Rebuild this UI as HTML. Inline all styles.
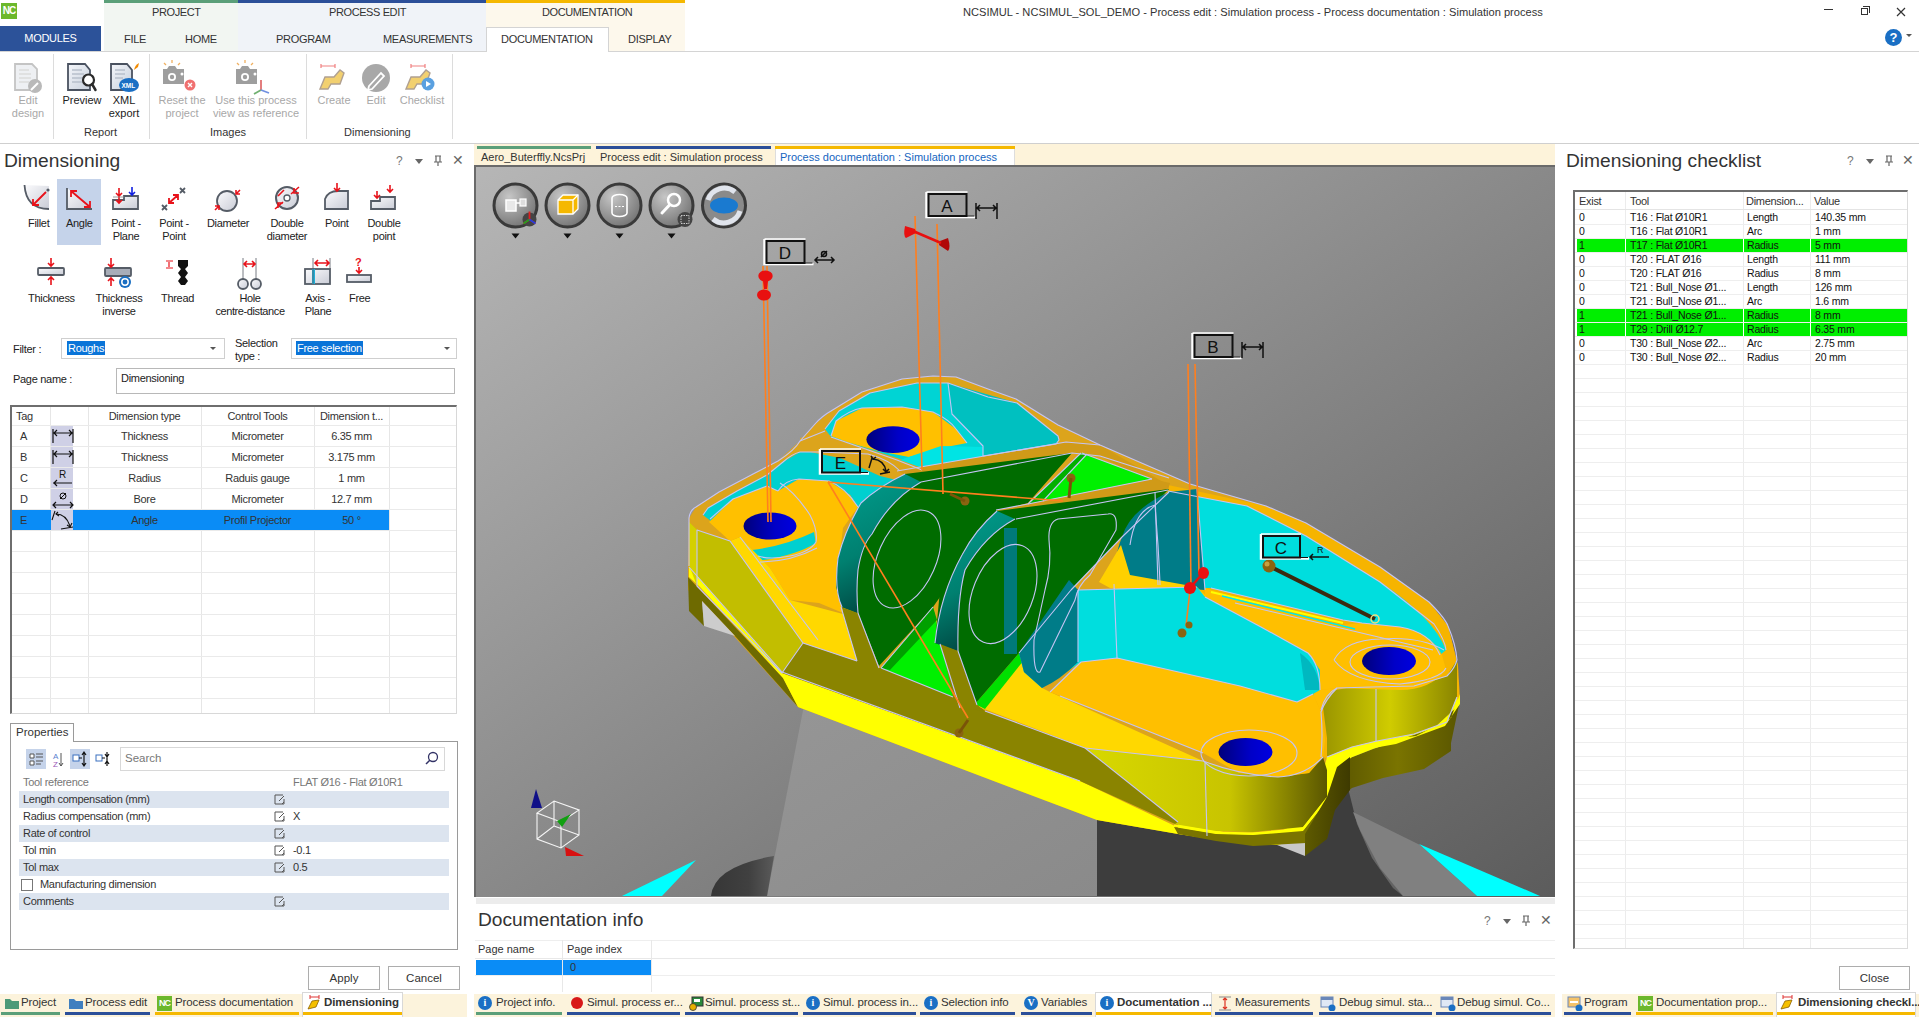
<!DOCTYPE html>
<html><head><meta charset="utf-8">
<style>
*{box-sizing:border-box}
body{margin:0;width:1919px;height:1017px;position:relative;overflow:hidden;background:#fff;font-family:"Liberation Sans",sans-serif;color:#222;font-size:11px}
.a{position:absolute;white-space:nowrap}
.ctxh{position:absolute;top:0;height:52px}
.tab{position:absolute;top:33px;font-size:11px;color:#333;letter-spacing:-0.3px}
.rb{position:absolute;text-align:center;font-size:11px;line-height:13px;color:#222}
.dis{color:#a8a8a8}
.sep{position:absolute;top:54px;height:85px;width:1px;background:#dcdcdc}
.glab{position:absolute;top:126px;font-size:11px;color:#333}
</style></head><body>
<!-- ===== TOP ===== -->
<div class="a" style="left:1px;top:3px;width:16px;height:16px;background:#6cb82c;color:#fff;font-weight:bold;font-size:10px;line-height:16px;text-align:center;letter-spacing:-1px">NC</div>
<div class="ctxh" style="left:104px;width:134px;background:#f2f6f2;border-top:3px solid #5b9f79"></div>
<div class="ctxh" style="left:238px;width:248px;background:#f0f3f8;border-top:3px solid #2c4f99"></div>
<div class="ctxh" style="left:486px;width:199px;background:#fdf8ec;border-top:3px solid #f5b800"></div>
<div class="a" style="left:152px;top:6px;font-size:11px;letter-spacing:-0.4px;color:#333">PROJECT</div>
<div class="a" style="left:329px;top:6px;font-size:11px;letter-spacing:-0.4px;color:#333">PROCESS EDIT</div>
<div class="a" style="left:542px;top:6px;font-size:11px;letter-spacing:-0.4px;color:#333">DOCUMENTATION</div>
<div class="a" style="left:963px;top:6px;font-size:11.1px;color:#333">NCSIMUL - NCSIMUL_SOL_DEMO - Process edit : Simulation process - Process documentation : Simulation process</div>
<!-- window buttons -->
<div class="a" style="left:1824px;top:9px;width:9px;height:1px;background:#333"></div>
<div class="a" style="left:1861px;top:8px;width:7px;height:7px;border:1px solid #333;background:#fff"></div><div class="a" style="left:1863px;top:6px;width:7px;height:7px;border-top:1px solid #333;border-right:1px solid #333"></div>
<svg class="a" style="left:1896px;top:7px" width="10" height="10"><path d="M1 1l8 8M9 1l-8 8" stroke="#333" stroke-width="1.2"/></svg>
<!-- tab row -->
<div class="a" style="left:0;top:26px;width:101px;height:25px;background:#2c5299;color:#fff;font-size:11px;line-height:25px;text-align:center;letter-spacing:-0.3px">MODULES</div>
<div class="a" style="left:0;top:51px;width:1919px;height:1px;background:#d4d4d4"></div>
<div class="tab" style="left:124px">FILE</div>
<div class="tab" style="left:185px">HOME</div>
<div class="tab" style="left:276px">PROGRAM</div>
<div class="tab" style="left:383px">MEASUREMENTS</div>
<div class="a" style="left:486px;top:27px;width:123px;height:25px;background:#fff;border:1px solid #d4d4d4;border-bottom:none"></div>
<div class="tab" style="left:501px">DOCUMENTATION</div>
<div class="tab" style="left:628px">DISPLAY</div>
<!-- help -->
<div class="a" style="left:1885px;top:29px;width:17px;height:17px;border-radius:50%;background:#1a6fc4;color:#fff;font-weight:bold;font-size:13px;line-height:17px;text-align:center">?</div>
<div class="a" style="left:1906px;top:34px;width:0;height:0;border-left:3px solid transparent;border-right:3px solid transparent;border-top:3px solid #555"></div>
<!-- ribbon -->
<div class="a" style="left:0;top:143px;width:1919px;height:1px;background:#cfcfcf"></div>
<div class="sep" style="left:53px"></div>
<div class="sep" style="left:149px"></div>
<div class="sep" style="left:306px"></div>
<div class="sep" style="left:452px"></div>
<div class="glab" style="left:84px">Report</div>
<div class="glab" style="left:210px">Images</div>
<div class="glab" style="left:344px">Dimensioning</div>
<!-- ribbon buttons -->
<div class="rb dis" style="left:8px;top:94px;width:40px">Edit<br>design</div>
<div class="rb" style="left:60px;top:94px;width:44px">Preview</div>
<div class="rb" style="left:104px;top:94px;width:40px">XML<br>export</div>
<div class="rb dis" style="left:154px;top:94px;width:56px">Reset the<br>project</div>
<div class="rb dis" style="left:208px;top:94px;width:96px">Use this process<br>view as reference</div>
<div class="rb dis" style="left:312px;top:94px;width:44px">Create</div>
<div class="rb dis" style="left:358px;top:94px;width:36px">Edit</div>
<div class="rb dis" style="left:396px;top:94px;width:52px">Checklist</div>
<svg class="a" style="left:0;top:52px" width="460" height="45">
 <defs>
  <linearGradient id="doc" x1="0" y1="0" x2="1" y2="1"><stop offset="0" stop-color="#f4f6fa"/><stop offset="1" stop-color="#c8d0dc"/></linearGradient>
 </defs>
 <!-- edit design (disabled) -->
 <path d="M15,12 h17 l5,5 v21 h-22 z" fill="#eef0f3" stroke="#c4c4c4" stroke-width="1.8"/>
 <path d="M19,18h10 M19,22h12 M19,26h12 M19,30h10" stroke="#dcdcdc" stroke-width="1.3"/>
 <circle cx="35" cy="34" r="7" fill="#b9b9b9"/>
 <path d="M31,38 l7-7" stroke="#fff" stroke-width="2"/>
 <!-- preview -->
 <path d="M68,12 h17 l5,6 v20 h-22 z" fill="url(#doc)" stroke="#4a5260" stroke-width="1.8"/>
 <path d="M72,18h10 M72,22h12 M72,26h12 M72,30h10" stroke="#b8c0cc" stroke-width="1.3"/>
 <circle cx="88.5" cy="28" r="5.5" fill="#fff" stroke="#2a2a2a" stroke-width="2.2"/>
 <path d="M92,32 l3.5,6" stroke="#2a2a2a" stroke-width="2.5" stroke-linecap="round"/>
 <!-- xml export -->
 <path d="M111,12 h16 l5,6 v20 h-21 z" fill="url(#doc)" stroke="#4a5260" stroke-width="1.8"/>
 <path d="M115,18h10 M115,22h10 M115,26h8" stroke="#b8c0cc" stroke-width="1.3"/>
 <ellipse cx="129" cy="33" rx="10" ry="7" fill="#1a6fc4"/>
 <text x="121.5" y="35.5" font-size="6.5" font-weight="bold" fill="#fff" font-family="Liberation Sans">XML</text>
 <path d="M134,18 q1,-5 5,-7 l-1,4 z" fill="#f28a00"/>
 <!-- reset camera (disabled) -->
 <path d="M167,17 l2,-3 h6 l2,3 h7 v15 h-21 v-15z" fill="#9e9e9e"/>
 <circle cx="172" cy="25" r="4" fill="#fff"/><circle cx="172" cy="25" r="2.2" fill="#9e9e9e"/>
 <circle cx="182" cy="22" r="1.5" fill="#fff"/>
 <path d="M172,11v-3 M166,13l-2,-2 M178,13l2,-2" stroke="#f0b060" stroke-width="1.3"/>
 <circle cx="190" cy="33" r="5.5" fill="#f07070"/>
 <path d="M188,31l4,4 M192,31l-4,4" stroke="#fff" stroke-width="1.4"/>
 <!-- use this view (disabled) -->
 <path d="M240,17 l2,-3 h6 l2,3 h7 v15 h-21 v-15z" fill="#9e9e9e"/>
 <circle cx="245" cy="25" r="4" fill="#fff"/><circle cx="245" cy="25" r="2.2" fill="#9e9e9e"/>
 <circle cx="255" cy="22" r="1.5" fill="#fff"/>
 <path d="M245,11v-3 M239,13l-2,-2 M251,13l2,-2" stroke="#f0b060" stroke-width="1.3"/>
 <path d="M261,38 v-10" stroke="#e07070" stroke-width="1.8"/><path d="M261,38 l-7,4" stroke="#70b070" stroke-width="1.8"/><path d="M261,38 l8,3" stroke="#7090e0" stroke-width="1.8"/>
 <!-- create (disabled) -->
 <path d="M321,14h14 M321,12v4 M335,12v4" stroke="#f08080" stroke-width="1.2"/>
 <path d="M320,37 l5,-12 h9 l6,-7 l4,3 l-4,11 h-9 l-3,5 z" fill="#f2d070" stroke="#b0a090" stroke-width="1.4"/>
 <!-- edit (disabled) -->
 <circle cx="376" cy="26" r="14" fill="#a8a8a8"/>
 <path d="M369,34 l12,-13 l3,3 l-12,13 l-4,1 z" fill="none" stroke="#fff" stroke-width="1.8"/>
 <!-- checklist (disabled) -->
 <path d="M411,14h14 M411,12v4 M425,12v4" stroke="#f08080" stroke-width="1.2"/>
 <path d="M406,37 l5,-12 h9 l6,-7 l4,3 l-4,11 h-9 l-3,5 z" fill="#f2d070" stroke="#b0a090" stroke-width="1.4"/>
 <circle cx="428" cy="32" r="6.5" fill="#5aa0e0"/>
 <path d="M426,29 l5,3 l-5,3 z" fill="#fff"/>
</svg>


<!-- ===== LEFT PANEL ===== -->
<div class="a" style="left:4px;top:150px;font-size:19.2px;color:#333">Dimensioning</div>
<div class="a" style="left:396px;top:154px;font-size:12px;color:#777">?</div>
<div class="a" style="left:415px;top:159px;width:0;height:0;border-left:4px solid transparent;border-right:4px solid transparent;border-top:5px solid #666"></div>
<svg class="a" style="left:433px;top:155px" width="10" height="12"><path d="M2 1h6M3 1v6h4V1M1 7h8M5 7v4" stroke="#666" stroke-width="1.2" fill="none"/></svg>
<div class="a" style="left:452px;top:152px;font-size:14px;color:#666">✕</div>
<!-- highlight Angle -->
<div class="a" style="left:57px;top:179px;width:44px;height:66px;background:#c5d3ea"></div>
<!-- icons row1 -->
<svg class="a" style="left:0;top:168px" width="420" height="48">
 <defs><linearGradient id="gi" x1="0" y1="0" x2="1" y2="1"><stop offset="0" stop-color="#fbfbfd"/><stop offset="1" stop-color="#c9ccd6"/></linearGradient></defs>
 <!-- fillet -->
 <path d="M24.5 20 Q26 44 49 44 V21 Z" transform="translate(0,-3)" fill="url(#gi)"/>
 <path d="M24.5 17 Q26 41 49 41" stroke="#555c66" stroke-width="1.8" fill="none"/>
 <circle cx="48" cy="22" r="1.6" fill="#555c66"/>
 <path d="M46 24 L34 36 M33 31v6h6" stroke="#e8121a" stroke-width="1.8" fill="none"/>
 <!-- angle -->
 <path d="M67 20 V41 H92" stroke="#555c66" stroke-width="1.8" fill="url(#gi)"/>
 <path d="M71 23 L90 39 M71 29v-6h6 M90 33v6h-6" stroke="#e8121a" stroke-width="1.8" fill="none"/>
 <!-- point-plane -->
 <path d="M113 41 V32 H124 V28 H138 V41 Z" stroke="#555c66" stroke-width="1.8" fill="url(#gi)"/>
 <path d="M119 20v8 M116 25l3 3 3-3 M119 27v8 M116 32l3 3 3-3" stroke="#e8121a" stroke-width="1.6" fill="none"/>
 <path d="M132 19v8 M129 24l3 3 3-3" stroke="#1020e0" stroke-width="1.6" fill="none"/>
 <path d="M113 29h11" stroke="#888" stroke-width="0.8"/>
 <!-- point-point -->
 <path d="M162 37l5 5 M167 37l-5 5 M180 20l5 5 M185 20l-5 5" stroke="#555c66" stroke-width="1.8"/>
 <path d="M169 35 L178 27 M169 30v5h5 M178 32v-5h-5" stroke="#e8121a" stroke-width="1.8" fill="none"/>
 <!-- diameter -->
 <circle cx="227" cy="33" r="10" fill="url(#gi)" stroke="#555c66" stroke-width="1.8"/>
 <path d="M240 22l-4 4 M236 22v4h4 M215 42l4-4 M219 42v-4h-4" stroke="#e8121a" stroke-width="1.6" fill="none"/>
 <!-- double diameter -->
 <circle cx="287" cy="30" r="11" fill="url(#gi)" stroke="#555c66" stroke-width="2"/>
 <circle cx="287" cy="30" r="3" fill="#fff" stroke="#555c66" stroke-width="1.3"/>
 <path d="M299 19l-8 7 M294 20v5h5 M275 41l8-7 M278 40v-5h5 M284 22l-6 6" stroke="#e8121a" stroke-width="1.6" fill="none"/>
 <!-- point -->
 <path d="M325 41 V31 Q328 23 338 23 H348 V41 Z" stroke="#555c66" stroke-width="1.8" fill="url(#gi)"/>
 <path d="M337 15v8 M334 20l3 3 3-3" stroke="#e8121a" stroke-width="1.6" fill="none"/>
 <!-- double point -->
 <path d="M371 41 V33 H380 V29 H395 V41 Z" stroke="#555c66" stroke-width="1.8" fill="url(#gi)"/>
 <path d="M377 23v7 M374 27l3 3 3-3 M390 17v7 M387 21l3 3 3-3" stroke="#e8121a" stroke-width="1.6" fill="none"/>
</svg>
<div class="a" style="left:28px;top:217px;font-size:11px;letter-spacing:-0.3px">Fillet</div>
<div class="a" style="left:66px;top:217px;font-size:11px;letter-spacing:-0.3px">Angle</div>
<div class="a" style="left:104px;top:217px;width:44px;text-align:center;font-size:11px;line-height:13px;white-space:normal;letter-spacing:-0.3px">Point -<br>Plane</div>
<div class="a" style="left:152px;top:217px;width:44px;text-align:center;font-size:11px;line-height:13px;letter-spacing:-0.3px">Point -<br>Point</div>
<div class="a" style="left:205px;top:217px;width:46px;text-align:center;font-size:11px;letter-spacing:-0.3px">Diameter</div>
<div class="a" style="left:262px;top:217px;width:50px;text-align:center;font-size:11px;line-height:13px;letter-spacing:-0.3px">Double<br>diameter</div>
<div class="a" style="left:325px;top:217px;font-size:11px;letter-spacing:-0.3px">Point</div>
<div class="a" style="left:362px;top:217px;width:44px;text-align:center;font-size:11px;line-height:13px;letter-spacing:-0.3px">Double<br>point</div>
<!-- icons row2 -->
<svg class="a" style="left:0;top:255px" width="420" height="40">
 <!-- thickness -->
 <rect x="38" y="13" width="26" height="7" rx="1" fill="url(#gi)" stroke="#555c66" stroke-width="1.8"/>
 <path d="M51 3v8 M48 8l3 3 3-3 M51 30v-8 M48 25l3-3 3 3" stroke="#e8121a" stroke-width="1.6" fill="none"/>
 <!-- thickness inverse -->
 <rect x="105" y="13" width="26" height="8" rx="1" fill="#a8adb8" stroke="#555c66" stroke-width="1.8"/>
 <path d="M111 3v9 M108 9l3 3 3-3 M111 31v-8 M108 26l3-3 3 3" stroke="#e8121a" stroke-width="1.6" fill="none"/>
 <circle cx="125" cy="27" r="6" fill="#1b6fc2"/>
 <circle cx="125" cy="27" r="3.2" fill="none" stroke="#fff" stroke-width="1.5"/>
 <!-- thread -->
 <path d="M178 5 h10 v6 l-3 3 3 4 -3 4 3 4 -3 4 h-4 l-3-4 3-4 -3-4 3-4 -3-3z" fill="#111"/>
 <path d="M166 6h7 M166 13h7 M169 7v5" stroke="#e8121a" stroke-width="1.2"/>
 <!-- hole centre-distance -->
 <circle cx="243" cy="29" r="5" fill="url(#gi)" stroke="#555c66" stroke-width="1.8"/>
 <circle cx="256" cy="29" r="5" fill="url(#gi)" stroke="#555c66" stroke-width="1.8"/>
 <path d="M243 3v22 M256 3v22" stroke="#555c66" stroke-width="0.8"/>
 <path d="M244 9h11 M247 6l-3 3 3 3 M252 6l3 3-3 3" stroke="#e8121a" stroke-width="1.6" fill="none"/>
 <!-- axis plane -->
 <rect x="305" y="14" width="25" height="15" fill="url(#gi)" stroke="#555c66" stroke-width="1.8"/>
 <rect x="312" y="14" width="3" height="15" fill="#20b0d8"/>
 <path d="M313 3v26 M330 3v11" stroke="#555c66" stroke-width="0.8"/>
 <path d="M315 8h14 M318 5l-3 3 3 3 M326 5l3 3-3 3" stroke="#e8121a" stroke-width="1.6" fill="none"/>
 <!-- free -->
 <rect x="347" y="20" width="24" height="7" fill="url(#gi)" stroke="#555c66" stroke-width="1.8"/>
 <text x="355" y="11" font-size="11" font-weight="bold" fill="#e8121a" font-family="Liberation Sans">?</text>
 <path d="M359 12v6 M356 15l3 3 3-3" stroke="#e8121a" stroke-width="1.6" fill="none"/>
</svg>
<div class="a" style="left:28px;top:292px;font-size:11px;letter-spacing:-0.3px">Thickness</div>
<div class="a" style="left:90px;top:292px;width:58px;text-align:center;font-size:11px;line-height:13px;letter-spacing:-0.3px">Thickness<br>inverse</div>
<div class="a" style="left:161px;top:292px;font-size:11px;letter-spacing:-0.3px">Thread</div>
<div class="a" style="left:206px;top:292px;width:88px;text-align:center;font-size:11px;line-height:13px;letter-spacing:-0.4px">Hole<br>centre-distance</div>
<div class="a" style="left:296px;top:292px;width:44px;text-align:center;font-size:11px;line-height:13px;letter-spacing:-0.3px">Axis -<br>Plane</div>
<div class="a" style="left:349px;top:292px;font-size:11px;letter-spacing:-0.3px">Free</div>
<!-- filter -->
<div class="a" style="left:13px;top:343px;font-size:11px;letter-spacing:-0.3px">Filter :</div>
<div class="a" style="left:61px;top:338px;width:164px;height:21px;border:1px solid #cfcfcf;background:#fff"></div>
<div class="a" style="left:67px;top:341px;height:14px;background:#0a74d8;color:#fff;font-size:11px;line-height:14px;padding:0 1px;letter-spacing:-0.3px">Roughs</div>
<div class="a" style="left:210px;top:347px;border-left:3px solid transparent;border-right:3px solid transparent;border-top:3px solid #555"></div>
<div class="a" style="left:235px;top:337px;font-size:11px;line-height:13px;letter-spacing:-0.3px">Selection<br>type :</div>
<div class="a" style="left:291px;top:338px;width:166px;height:21px;border:1px solid #cfcfcf;background:#fff"></div>
<div class="a" style="left:296px;top:341px;height:14px;background:#0a74d8;color:#fff;font-size:11px;line-height:14px;padding:0 1px;letter-spacing:-0.3px">Free selection</div>
<div class="a" style="left:444px;top:347px;border-left:3px solid transparent;border-right:3px solid transparent;border-top:3px solid #555"></div>
<div class="a" style="left:13px;top:373px;font-size:11px;letter-spacing:-0.3px">Page name :</div>
<div class="a" style="left:116px;top:368px;width:339px;height:26px;border:1px solid #b8b8b8;background:#fff"></div>
<div class="a" style="left:121px;top:372px;font-size:11px;letter-spacing:-0.3px">Dimensioning</div>
<!-- GRID -->
<div class="a" style="left:10px;top:405px;width:447px;height:309px;border-top:2px solid #6e6e6e;border-left:2px solid #6e6e6e;border-right:1px solid #d8d8d8;border-bottom:1px solid #d8d8d8;background:#fff;overflow:hidden">
<div class="a" style="left:38px;top:0;width:1px;height:309px;background:#e6e6e6"></div>
<div class="a" style="left:76px;top:0;width:1px;height:309px;background:#e6e6e6"></div>
<div class="a" style="left:189px;top:0;width:1px;height:309px;background:#e6e6e6"></div>
<div class="a" style="left:302px;top:0;width:1px;height:309px;background:#e6e6e6"></div>
<div class="a" style="left:377px;top:0;width:1px;height:309px;background:#e6e6e6"></div>
<div class="a" style="left:0;top:18px;width:447px;height:1px;background:#eaeaea"></div>
<div class="a" style="left:0;top:39px;width:447px;height:1px;background:#eaeaea"></div>
<div class="a" style="left:0;top:60px;width:447px;height:1px;background:#eaeaea"></div>
<div class="a" style="left:0;top:81px;width:447px;height:1px;background:#eaeaea"></div>
<div class="a" style="left:0;top:102px;width:447px;height:1px;background:#eaeaea"></div>
<div class="a" style="left:0;top:123px;width:447px;height:1px;background:#eaeaea"></div>
<div class="a" style="left:0;top:144px;width:447px;height:1px;background:#eaeaea"></div>
<div class="a" style="left:0;top:165px;width:447px;height:1px;background:#eaeaea"></div>
<div class="a" style="left:0;top:186px;width:447px;height:1px;background:#eaeaea"></div>
<div class="a" style="left:0;top:207px;width:447px;height:1px;background:#eaeaea"></div>
<div class="a" style="left:0;top:228px;width:447px;height:1px;background:#eaeaea"></div>
<div class="a" style="left:0;top:249px;width:447px;height:1px;background:#eaeaea"></div>
<div class="a" style="left:0;top:270px;width:447px;height:1px;background:#eaeaea"></div>
<div class="a" style="left:0;top:291px;width:447px;height:1px;background:#eaeaea"></div>
<div class="a" style="left:4px;top:3px;width:34px;text-align:left;font-size:11px;color:#333;letter-spacing:-0.3px">Tag</div>
<div class="a" style="left:76px;top:3px;width:113px;text-align:center;font-size:11px;color:#333;letter-spacing:-0.3px">Dimension type</div>
<div class="a" style="left:189px;top:3px;width:113px;text-align:center;font-size:11px;color:#333;letter-spacing:-0.3px">Control Tools</div>
<div class="a" style="left:302px;top:3px;width:75px;text-align:center;font-size:11px;color:#333;letter-spacing:-0.3px">Dimension t...</div>
<div class="a" style="left:39px;top:19px;width:22px;height:20px;background:#cfd0e6"></div>
<div class="a" style="left:8px;top:23px;width:30px;text-align:left;font-size:11px;color:#333;letter-spacing:-0.3px">A</div>
<div class="a" style="left:76px;top:23px;width:113px;text-align:center;font-size:11px;color:#333;letter-spacing:-0.3px">Thickness</div>
<div class="a" style="left:189px;top:23px;width:113px;text-align:center;font-size:11px;color:#333;letter-spacing:-0.3px">Micrometer</div>
<div class="a" style="left:302px;top:23px;width:75px;text-align:center;font-size:11px;color:#333;letter-spacing:-0.3px">6.35 mm</div>
<div class="a" style="left:39px;top:40px;width:22px;height:20px;background:#cfd0e6"></div>
<div class="a" style="left:8px;top:44px;width:30px;text-align:left;font-size:11px;color:#333;letter-spacing:-0.3px">B</div>
<div class="a" style="left:76px;top:44px;width:113px;text-align:center;font-size:11px;color:#333;letter-spacing:-0.3px">Thickness</div>
<div class="a" style="left:189px;top:44px;width:113px;text-align:center;font-size:11px;color:#333;letter-spacing:-0.3px">Micrometer</div>
<div class="a" style="left:302px;top:44px;width:75px;text-align:center;font-size:11px;color:#333;letter-spacing:-0.3px">3.175 mm</div>
<div class="a" style="left:39px;top:61px;width:22px;height:20px;background:#cfd0e6"></div>
<div class="a" style="left:8px;top:65px;width:30px;text-align:left;font-size:11px;color:#333;letter-spacing:-0.3px">C</div>
<div class="a" style="left:76px;top:65px;width:113px;text-align:center;font-size:11px;color:#333;letter-spacing:-0.3px">Radius</div>
<div class="a" style="left:189px;top:65px;width:113px;text-align:center;font-size:11px;color:#333;letter-spacing:-0.3px">Raduis gauge</div>
<div class="a" style="left:302px;top:65px;width:75px;text-align:center;font-size:11px;color:#333;letter-spacing:-0.3px">1 mm</div>
<div class="a" style="left:39px;top:82px;width:22px;height:20px;background:#cfd0e6"></div>
<div class="a" style="left:8px;top:86px;width:30px;text-align:left;font-size:11px;color:#333;letter-spacing:-0.3px">D</div>
<div class="a" style="left:76px;top:86px;width:113px;text-align:center;font-size:11px;color:#333;letter-spacing:-0.3px">Bore</div>
<div class="a" style="left:189px;top:86px;width:113px;text-align:center;font-size:11px;color:#333;letter-spacing:-0.3px">Micrometer</div>
<div class="a" style="left:302px;top:86px;width:75px;text-align:center;font-size:11px;color:#333;letter-spacing:-0.3px">12.7 mm</div>
<div class="a" style="left:0;top:103px;width:377px;height:20px;background:#0a8cf6"></div>
<div class="a" style="left:39px;top:103px;width:22px;height:20px;background:#cfd0e6"></div>
<div class="a" style="left:8px;top:107px;width:30px;text-align:left;font-size:11px;color:#333;letter-spacing:-0.3px">E</div>
<div class="a" style="left:76px;top:107px;width:113px;text-align:center;font-size:11px;color:#333;letter-spacing:-0.3px">Angle</div>
<div class="a" style="left:189px;top:107px;width:113px;text-align:center;font-size:11px;color:#333;letter-spacing:-0.3px">Profil Projector</div>
<div class="a" style="left:302px;top:107px;width:75px;text-align:center;font-size:11px;color:#333;letter-spacing:-0.3px">50 °</div>
<svg class="a" style="left:39px;top:19px" width="24" height="20"><path d="M2 3v14 M22 3v14 M3 7h18 M6 4l-3 3 3 3 M18 4l3 3-3 3" stroke="#111" stroke-width="1.2" fill="none"/></svg>
<svg class="a" style="left:39px;top:40px" width="24" height="20"><path d="M2 3v14 M22 3v14 M3 7h18 M6 4l-3 3 3 3 M18 4l3 3-3 3" stroke="#111" stroke-width="1.2" fill="none"/></svg>
<svg class="a" style="left:39px;top:61px" width="24" height="20"><text x="8" y="10" font-size="10" font-family="Liberation Sans" fill="#111">R</text><path d="M2 15h19 M6 12l-3 3 3 3" stroke="#111" stroke-width="1.2" fill="none"/></svg>
<svg class="a" style="left:39px;top:82px" width="24" height="20"><circle cx="12" cy="7" r="3" stroke="#111" stroke-width="1" fill="none"/><path d="M9 10l6-6" stroke="#111" stroke-width="1"/><path d="M2 16h20 M5 13l-3 3 3 3 M19 13l3 3-3 3" stroke="#111" stroke-width="1.2" fill="none"/></svg>
<svg class="a" style="left:39px;top:103px" width="24" height="20"><path d="M1 10 L4 1 M5 4 Q15 4 19 16" stroke="#111" stroke-width="1.1" fill="none"/><path d="M7 2l-2 2 3 2 M16 15l3 2 2-4 M10 19 L22 17" stroke="#111" stroke-width="1.1" fill="none"/></svg>
</div>


<!-- ===== CENTER ===== -->
<!-- doc tabs -->
<div class="a" style="left:474px;top:144px;width:1081px;height:22px;background:#fdf3da"></div>
<div class="a" style="left:477px;top:146px;width:114px;height:3px;background:#5b9f79"></div>
<div class="a" style="left:596px;top:146px;width:175px;height:3px;background:#2c4f99"></div>
<div class="a" style="left:775px;top:146px;width:240px;height:3px;background:#f5b800"></div>
<div class="a" style="left:775px;top:149px;width:240px;height:17px;background:#fff;border-left:1px solid #ddd;border-right:1px solid #ddd"></div>
<div class="a" style="left:481px;top:151px;font-size:11px;color:#333">Aero_Buterffly.NcsPrj</div>
<div class="a" style="left:600px;top:151px;font-size:11px;color:#333">Process edit : Simulation process</div>
<div class="a" style="left:780px;top:151px;font-size:11px;color:#1565c0">Process documentation : Simulation process</div>
<!-- view -->
<div class="a" style="left:474px;top:165px;width:1081px;height:732px;border-top:2px solid #6a6a6a;border-left:2px solid #6a6a6a;background:linear-gradient(to bottom right,#b6b6b6,#5c5c5c);overflow:hidden"></div>
<svg class="a" style="left:0;top:0" width="1919" height="1017">
<defs>
 <clipPath id="vc"><rect x="476" y="167" width="1079" height="729"/></clipPath>
 <radialGradient id="btn" cx="0.35" cy="0.3" r="0.8"><stop offset="0" stop-color="#c6c6c6"/><stop offset="1" stop-color="#6e6e6e"/></radialGradient>
 <linearGradient id="wallR" x1="0" y1="0" x2="1" y2="0"><stop offset="0" stop-color="#d8d800"/><stop offset="0.6" stop-color="#c8c400"/><stop offset="1" stop-color="#5a5600"/></linearGradient>
 <linearGradient id="wallR2" x1="0" y1="0" x2="1" y2="0"><stop offset="0" stop-color="#9a9500"/><stop offset="0.5" stop-color="#d0cc00"/><stop offset="1" stop-color="#8a8500"/></linearGradient>
 <linearGradient id="lowR" x1="0" y1="0" x2="1" y2="0"><stop offset="0" stop-color="#4a4600"/><stop offset="0.6" stop-color="#7a7400"/><stop offset="1" stop-color="#5a5600"/></linearGradient>
 <linearGradient id="hole" x1="0" y1="0" x2="1" y2="0"><stop offset="0" stop-color="#00007a"/><stop offset="0.6" stop-color="#0000c8"/><stop offset="1" stop-color="#0000e0"/></linearGradient>
 <linearGradient id="cyw" x1="0" y1="0" x2="0" y2="1"><stop offset="0" stop-color="#00c8c8"/><stop offset="1" stop-color="#00e4e4"/></linearGradient>
 <linearGradient id="ped" x1="0" y1="0" x2="1" y2="1"><stop offset="0" stop-color="#969696"/><stop offset="1" stop-color="#8a8a8a"/></linearGradient>
<linearGradient id="ring" x1="0" y1="0" x2="0.3" y2="1"><stop offset="0" stop-color="#00a090"/><stop offset="0.6" stop-color="#008070"/><stop offset="1" stop-color="#004a44"/></linearGradient>
<linearGradient id="blob" x1="0" y1="0" x2="1" y2="0"><stop offset="0" stop-color="#363636"/><stop offset="0.6" stop-color="#404040"/><stop offset="1" stop-color="#5a5a5a"/></linearGradient>
<linearGradient id="sc" x1="0" y1="0" x2="1" y2="0"><stop offset="0" stop-color="#5e5a00"/><stop offset="1" stop-color="#3e3a00"/></linearGradient>
</defs>
<g clip-path="url(#vc)">
<!-- pedestal -->
<polygon points="805,700 1100,790 1097,896 767,896" fill="url(#ped)"/>
<path d="M711,896 Q714,866 774,856 L767,896 Z" fill="url(#blob)"/>
<polygon points="1097,812 1346,780 1357,824 1372,858 1393,888 1403,896 1097,896" fill="#3d3d3d"/>
<polygon points="1353,812 1420,845 1477,896 1403,896 1380,868 1360,830" fill="#808080"/>
<polygon points="1419,844 1540,896 1477,896" fill="#00ffff"/>
<polygon points="622,896 696,860 662,896" fill="#00ffff"/>
<polygon points="1272,843 1306,833 1305,856" fill="#c8c8c8"/>

<!-- lower plate under right lobe -->
<polygon points="1306,830 1327,767 1373,749 1434,728 1459,705 1451,743 1451,751 1424,769 1383,778 1352,788 1337,800 1327,838 1306,854" fill="url(#lowR)"/>
<!-- whole silhouette (rim orange) -->
<polygon points="689,518 696,507 719,492 755,473 778,461 800,441 815,424 831,411 862,392 902,379 933,376 956,377 988,389 1016,399 1058,425 1100,445 1190,484 1266,506 1306,523 1380,567 1429,602 1448,626 1458,666 1457,697 1327,757 1320,800 1306,839 1276,845 1232,842 1178,834 1097,820 798,707 702,601 688,590 688,565" fill="#dca41c"/>
<polygon points="1168,485 1266,506 1306,523 1380,567 1429,602 1448,626 1458,666 1460,700 1330,760 1200,700" fill="#f6b400"/>
<!-- dark olive bottom band at left end -->
<polygon points="688,577 783,678 798,707 735,636 702,601 704,626 689,611" fill="#6e6a00"/>
<polygon points="702,601 704,626 735,636" fill="#cccccc"/>
<!-- bottom bright yellow strip -->
<polygon points="689,564 782,673 1080,781 1175,826 1178,834 1097,820 798,707 783,678 700,587 689,577" fill="#ffff00"/>
<polygon points="1178,821 1232,834 1281,831 1311,817 1327,757 1346,746 1376,741 1416,736 1451,718 1460,694 1460,704 1445,726 1396,744 1357,751 1337,773 1331,800 1306,839 1276,845 1232,842 1178,834" fill="#ffff00"/>
<!-- front-right yellow-olive face under bottom hole -->
<polygon points="1085,748 1203,761 1239,773 1278,777 1309,773 1323,757 1327,770 1327,797 1303,827 1253,832 1216,831 1174,824" fill="url(#wallR)"/>
<polygon points="1174,827 1216,834 1253,835 1303,831 1327,800 1329,812 1306,843 1253,846 1216,841 1178,834" fill="#7a7400"/>
<path d="M1174,825.5 L1216,832.5 L1253,833.5 L1303,829 L1327,798.5" stroke="#ffff00" stroke-width="2.2" fill="none"/>
<!-- right lobe outer wall -->
<polygon points="1323,707 1331,691 1352,687 1377,689 1414,687 1447,676 1457,660 1457,697 1447,722 1414,734 1377,741 1352,747 1327,757 1327,738" fill="url(#wallR2)"/>
<polygon points="1327,757 1352,747 1377,741 1414,734 1447,722 1457,697 1459,705 1434,728 1373,749 1327,767" fill="#ffff00"/>
<polygon points="1327,757 1358,747 1334,778 1328,800" fill="#ffff00"/>
<polygon points="1305,834 1327,797 1337,767 1350,757 1350,790 1335,810 1327,839 1305,856" fill="url(#sc)"/>
<!-- left end faces -->
<polygon points="689,522 697,530 730,541 803,643 782,673 689,567" fill="#c2be00"/>
<polygon points="689,522 697,530 697,586 689,565" fill="#d4d000"/>
<polygon points="730,541 740,537 818,640 803,643" fill="#ffd800"/>
<!-- front dark olive face -->
<polygon points="782,673 803,643 857,661 841,607 858,613 879,668 882,668 940,644 958,651 977,705 985,711 1085,748 1178,822 1175,824 1080,781" fill="#8a8400"/>
<!-- yellow slope center-front -->
<polygon points="979,707 1019,653 1024,672 1042,688 1050,692 1203,761 1085,748" fill="#ffd800"/>
<polygon points="975,704 1019,653 1024,660 985,709" fill="#00e000"/>

<!-- ===== left pocket ===== -->
<polygon points="703,515 708,508 737,491 767,475 783,462 800,452 819,452 868,454 900,471 900,487 858,507 850,495 829,481 799,479 778,491 740,505 712,522" fill="#00d0d0"/>
<polygon points="709,522 733,499 767,486 778,491 799,479 829,481 850,495 858,507 843,528 837,578 843,613 819,603 790,600 770,568 740,537 730,541" fill="#ffc000"/>
<path d="M752,550 Q785,546 814,532 L816,543 Q795,556 757,561 Z" fill="#00d0d0"/>
<polygon points="740,537 770,568 790,600 843,614 857,661 803,643" fill="#ffd800"/>
<ellipse cx="770" cy="526" rx="26.5" ry="13.6" fill="url(#hole)"/>

<!-- ===== top pocket (hole 2) ===== -->
<polygon points="825,429 839,411 870,393 917,383 948,383 988,397 1017,403 1058,436 1059,440 1056,444 983,456 972,460 925,468 897,458 831,437" fill="#00d4d4"/>
<polygon points="948,383 1017,403 1058,436 1059,440 1056,444 983,456 983,446 952,414" fill="#00c0c0"/>
<polygon points="831,436 836,421 862,408 902,407 933,412 956,429 967,443 941,448 909,457 878,451 847,442" fill="#ffc000"/>
<polygon points="900,460 941,446 983,447 983,456 925,469" fill="#00e4e4"/>
<ellipse cx="893" cy="439.6" rx="26.6" ry="13.3" fill="url(#hole)"/>
<polygon points="800,438 825,431 831,437 897,460 922,470 909,483 880,476 840,458 800,450" fill="#dca41c"/>

<!-- ===== wall 1 ===== -->
<polygon points="897,471 1066,442 1100,445 1168,485 1168,492 1100,456 1072,453 921,482" fill="#d09a18"/>
<polygon points="905,474 1072,453 1028,503 997,511 945,590 933,607 879,666 858,613 842,607 836,587 838,558 861,503" fill="#006c00"/>
<polygon points="1028,504 1082,453 1152,479" fill="#00f000"/>
<polygon points="1028,504 1081,453 1087,454 1043,501" fill="#00b000"/>
<polygon points="881,668 933,607 953,697" fill="#00f000"/>
<polygon points="881,668 933,607 937,620 890,670" fill="#00a000"/>
<path d="M905,474 Q878,487 861,503 Q845,530 838,558 Q834,590 842,607 L858,613 Q856,590 858,570 Q862,545 872,534 Q890,500 921,482 Z" fill="url(#ring)"/>
<!-- ===== wall 2 ===== -->
<polygon points="996,510 1028,504 1152,479 1170,483 1168,490 1016,519" fill="#d09a18"/>
<polygon points="997,511 1169,489 1122,537 1071,590 1019,653 975,704 958,651 935,643 940,590 965,550" fill="#006c00"/>
<path d="M997,511 Q975,530 962,555 Q940,595 935,643 L958,651 Q957,600 965,570 Q985,535 1015,519 Z" fill="url(#ring)"/>
<rect x="1004" y="528" width="13" height="126" fill="#007a7a"/>
<polygon points="940,644 958,651 977,705 985,711 960,708" fill="#8a8400"/>
<!-- ===== right pocket ===== -->
<path d="M1168,491 L1247,506 L1306,536 L1380,582 Q1434,618 1446,650 L1440,655 Q1425,632 1400,627 L1362,623 L1343,620 L1211,588 L1168,588 Z" fill="#00dede"/>
<path d="M1122,537 Q1130,510 1169,492 L1197,489 L1205,590 L1118,584 Q1112,560 1122,537 Z" fill="#007c88"/>
<polygon points="1099,582 1121,545 1130,575 1197,587 1207,597 1110,588" fill="#ffd000"/>
<!-- orange tongue + hole4 boss -->
<path d="M1205,588 L1272,609 L1343,625 L1362,623 L1400,627 Q1430,632 1442,655 L1446,670 Q1430,690 1400,690 L1337,688 L1320,690 L1320,670 L1308,653 L1261,627 L1205,597 Z" fill="#ffbf00"/>
<path d="M1211,592 L1343,623" stroke="#ffff00" stroke-width="2"/>
<path d="M1222,596 L1355,629" stroke="#00eaea" stroke-width="1.5"/>
<!-- lower center pocket -->
<polygon points="1019,653 1071,590 1078,590 1197,587 1205,597 1261,627 1308,653 1320,670 1320,690 1313,698 1297,702 1240,686 1117,658 1081,662 1042,688 1024,672" fill="#00dede"/>
<path d="M1019,653 L1069,580 L1078,590 L1078,662 Q1060,680 1042,688 L1024,672 Z" fill="#007c88"/>
<path d="M1300,653 Q1318,665 1320,690 L1305,690 Z" fill="#00b8c0"/>
<!-- orange floors lower -->
<polygon points="1050,692 1081,662 1117,658 1240,686 1297,702 1313,694 1321,712 1325,740 1323,757 1309,773 1278,777 1239,773 1203,753 1060,696" fill="#ffbf00"/>
<polygon points="1313,694 1320,690 1337,688 1325,700 1321,712" fill="#ffbf00"/>
<ellipse cx="1245.5" cy="752" rx="27" ry="14" fill="url(#hole)"/>
<ellipse cx="1389" cy="661" rx="27" ry="14" fill="url(#hole)"/>

<g stroke="#c4c4f4" stroke-width="1.1" fill="none" stroke-linejoin="round">
 <!-- outer rim top edge -->
 <path d="M689,566 L689,518 Q690,510 696,507 L719,492 L755,473 L778,461 Q795,450 800,441 L815,424 Q822,416 831,411 L862,392 L902,379 L933,376 L956,377 L988,389 L1016,399 L1058,425 L1100,445 L1190,484 L1266,506 L1306,523 L1380,567 L1429,602 Q1445,618 1448,626 Q1456,645 1457,660"/>
 <!-- left end -->
 <path d="M697,530 L730,541 L803,643 L782,673 L697,586 Z"/>
 <path d="M740,537 L818,640"/>
 <path d="M689,567 L782,672 L1080,781"/>
 <path d="M803,643 L857,661"/>
 <path d="M841,607 L857,661 M858,613 L879,668 M881,668 L933,607 M953,697 L881,668 M940,644 L960,708 M958,651 L977,705"/>
 <path d="M985,711 L1085,748 L1203,761 Q1240,775 1278,777 Q1305,776 1323,757"/>
 <path d="M1085,748 L1178,822"/>
 <path d="M1205,762 L1207,836"/>
 <!-- left pocket -->
 <path d="M703,515 L708,508 L737,491 L767,475 L783,462 Q792,454 800,452 L819,452 L868,454 Q890,460 900,471"/>
 <path d="M710,519 L733,499 L767,486 L778,491 M778,491 Q785,480 799,479 L829,481 Q845,487 858,507"/>
 <path d="M780,483 Q795,492 810,515 Q818,530 816,542 Q810,552 790,556 Q770,560 758,556"/>
 <path d="M760,562 Q790,562 817,548"/>
 <!-- top pocket -->
 <path d="M825,429 L839,411 L870,393 L917,383 L948,383 L988,397 L1017,403 L1058,436 L1059,440 L1056,444 L983,456"/>
 <path d="M831,436 L836,421 Q850,410 862,408 L902,407 L933,412 Q950,420 956,429 L967,443"/>
 <path d="M948,383 L952,414 L983,446 L983,456"/>
 <path d="M800,441 L825,431 M831,437 L897,460 L922,470"/>
 <!-- wall bands -->
 <path d="M897,471 L1066,442 L1100,445 M921,482 L1072,453 L1100,456 L1169,478"/>
 <path d="M996,510 L1028,504 L1152,479 M1016,519 L1168,490"/>
 <path d="M1081,453 L1028,504 M1087,454 L1043,501 M1082,453 L1152,479"/>
 <!-- rings -->
 <path d="M905,474 Q878,487 861,503 Q845,530 838,558 Q834,590 842,607"/>
 <path d="M921,482 Q890,500 872,534 Q862,545 858,570 Q856,590 858,613"/>
 <path d="M997,511 Q975,530 962,555 Q940,595 935,643"/>
 <path d="M1015,519 Q985,535 965,570 Q957,600 958,651"/>
 <ellipse cx="907" cy="559" rx="29" ry="52" transform="rotate(24 907 559)"/>
 <ellipse cx="1003" cy="594" rx="30" ry="52" transform="rotate(22 1003 594)"/>
 <path d="M1058,519 Q1048,522 1049,540 Q1052,565 1045,590 L1034,640 Q1033,675 1040,672 L1075,600 Q1078,585 1090,575 L1116,530 Q1118,512 1108,514 Z"/>
 <path d="M1130,545 Q1135,510 1155,505 L1158,545 Q1160,580 1160,585"/>
 <path d="M1122,537 L1169,492 M1071,590 L1122,537 M1019,653 L1071,590"/>
 <!-- right pocket -->
 <path d="M1168,491 L1247,506 L1306,536 L1380,582 L1434,624 Q1445,640 1446,650"/>
 <path d="M1197,489 L1205,590 M1155,492 L1158,585"/>
 <path d="M1211,588 L1343,620 L1362,623 L1400,627 Q1430,632 1440,655"/>
 <path d="M1205,597 L1261,627 L1308,653 Q1320,665 1320,690 M1235,603 L1433,650"/>
 <path d="M1078,590 L1197,587 M1078,590 L1078,662 M1114,584 L1117,658"/>
 <path d="M1081,662 L1117,658 L1240,686 L1297,702 L1313,694"/>
 <path d="M1050,692 L1081,662 M1060,696 L1203,753"/>
 <ellipse cx="1249" cy="753" rx="48" ry="23"/>
 <ellipse cx="1390" cy="662" rx="40" ry="17"/>
 <path d="M1334,660 Q1345,640 1380,639 Q1420,636 1444,650 M1334,660 Q1350,682 1400,684 Q1440,680 1446,668"/>
 <path d="M1321,710 Q1325,694 1337,688 L1372,687 L1414,686 L1447,676 Q1455,668 1457,660"/>
 <path d="M1327,757 L1352,747 L1377,741 L1414,734 L1447,722 L1457,697"/>
 <path d="M1376,689 L1376,741"/>
 <path d="M1337,688 Q1325,700 1321,712 Q1323,735 1321,757"/>
</g>

<!-- ===== annotations ===== -->
<g stroke="#ff7f1e" stroke-width="1.6" fill="none">
 <path d="M763,266 L768,522"/><path d="M767,266 L771,522"/>
 <path d="M915,216 L922,470"/><path d="M937,224 L943,494"/>
 <path d="M1188,364 L1191,588"/><path d="M1195,364 L1199,574"/>
 <path d="M828,482 L1063,501"/><path d="M828,482 L968,718"/>
 <path d="M1190,590 L1186,626"/>
</g>
<!-- red markers -->
<g fill="#e81010">
 <ellipse cx="765.5" cy="276" rx="7.2" ry="5.5"/><path d="M763,281 L768,281 L767,289 L764,289Z"/><ellipse cx="764" cy="295" rx="7" ry="5.5"/>
 <path d="M905,226 Q903,236 906,238 L916,233 L915,229 Z"/><path d="M948,238 Q951,248 948,251 L939,245 L940,241 Z" fill="#b00808"/>
 <path d="M913,231 L941,243" stroke="#e81010" stroke-width="2.5"/>
 <ellipse cx="1203.5" cy="573" rx="5.5" ry="6"/><ellipse cx="1190" cy="588" rx="6" ry="6"/>
 <path d="M1190,588 L1203,573" stroke="#e81010" stroke-width="2.5"/>
</g>
<!-- brown pins -->
<g fill="#8a6410">
 <circle cx="965" cy="501" r="4.5"/><path d="M950,494 L965,501" stroke="#7a5408" stroke-width="3"/>
 <circle cx="1071" cy="478" r="4.5"/><path d="M1071,478 L1069,498" stroke="#7a5408" stroke-width="3"/>
 <circle cx="959" cy="733" r="4.5"/><path d="M959,733 L968,720" stroke="#7a5408" stroke-width="3"/>
 <circle cx="1182" cy="633" r="4.5"/><circle cx="1189" cy="625" r="3.5"/>
</g>
<!-- C rod -->
<path d="M1269,566 L1375,619" stroke="#3a2a10" stroke-width="4"/>
<circle cx="1375" cy="619" r="4" fill="none" stroke="#f0e080" stroke-width="1.5"/>
<circle cx="1269" cy="566" r="6.5" fill="#8a6410"/>
<circle cx="1267" cy="564" r="2.5" fill="#c8a040"/>
<!-- labels -->
<g font-family="Liberation Sans" font-size="17" fill="#111">
 <path d="M764.5,239 V264 H813.5" stroke="#fff" stroke-width="2.5" fill="none"/>
 <path d="M764.5,239 H805.5" stroke="#fff" stroke-width="1.5" fill="none"/>
 <rect x="766.5" y="241" width="38" height="22" fill="none" stroke="#111" stroke-width="2"/>
 <path d="M804.5,263 H812.5" stroke="#111" stroke-width="1"/>
 <text x="785.0" y="259" text-anchor="middle">D</text>
 <path d="M926.5,192 V217 H975.5" stroke="#fff" stroke-width="2.5" fill="none"/>
 <path d="M926.5,192 H967.5" stroke="#fff" stroke-width="1.5" fill="none"/>
 <rect x="928.5" y="194" width="38" height="22" fill="none" stroke="#111" stroke-width="2"/>
 <path d="M966.5,216 H974.5" stroke="#111" stroke-width="1"/>
 <text x="947.0" y="212" text-anchor="middle">A</text>
 <path d="M1192.5,333 V358 H1241.5" stroke="#fff" stroke-width="2.5" fill="none"/>
 <path d="M1192.5,333 H1233.5" stroke="#fff" stroke-width="1.5" fill="none"/>
 <rect x="1194.5" y="335" width="38" height="22" fill="none" stroke="#111" stroke-width="2"/>
 <path d="M1232.5,357 H1240.5" stroke="#111" stroke-width="1"/>
 <text x="1213.0" y="353" text-anchor="middle">B</text>
 <path d="M1261,534 V558.5 H1309" stroke="#fff" stroke-width="2.5" fill="none"/>
 <path d="M1261,534 H1301" stroke="#fff" stroke-width="1.5" fill="none"/>
 <rect x="1263" y="536" width="37" height="21.5" fill="none" stroke="#111" stroke-width="2"/>
 <path d="M1300,557.5 H1308" stroke="#111" stroke-width="1"/>
 <text x="1281.0" y="553.5" text-anchor="middle">C</text>
 <path d="M820,449 V473.5 H869" stroke="#fff" stroke-width="2.5" fill="none"/>
 <path d="M820,449 H861" stroke="#fff" stroke-width="1.5" fill="none"/>
 <rect x="822" y="451" width="38" height="21.5" fill="none" stroke="#111" stroke-width="2"/>
 <path d="M860,472.5 H868" stroke="#111" stroke-width="1"/>
 <text x="840.5" y="468.5" text-anchor="middle">E</text>
</g>
<!-- dim icons -->
<g stroke="#111" stroke-width="1.5" fill="none">
 <path d="M976,203v16 M997,203v16 M977,208h19 M980,205l-3,3 3,3 M993,205l3,3-3,3"/>
 <path d="M1242,342v16 M1263,342v16 M1243,347h19 M1246,344l-3,3 3,3 M1259,344l3,3-3,3"/>
 <path d="M815,260h19 M818,257l-3,3 3,3 M831,257l3,3-3,3"/><circle cx="824" cy="254" r="2.5"/><path d="M821,257l6-6"/>
 <path d="M1310,557h19 M1313,554l-3,3 3,3"/>
 <path d="M869,468 L872,458 M873,459 Q884,460 886,471 M871,456l2,3 3-2 M883,469l3,3 3-3 M880,474 L890,472"/>
</g>
<text x="1317" y="553" font-family="Liberation Sans" font-size="9" fill="#111">R</text>
<!-- nav buttons -->
<g>
 <circle cx="515.5" cy="205.5" r="21.5" fill="url(#btn)" stroke="#3a3a3a" stroke-width="3"/>
 <circle cx="567.5" cy="205.5" r="21.5" fill="url(#btn)" stroke="#3a3a3a" stroke-width="3"/>
 <circle cx="619.5" cy="205.5" r="21.5" fill="url(#btn)" stroke="#3a3a3a" stroke-width="3"/>
 <circle cx="671.5" cy="205.5" r="21.5" fill="url(#btn)" stroke="#3a3a3a" stroke-width="3"/>
 <circle cx="724" cy="205.5" r="21.5" fill="#8a8a8a" stroke="#3a3a3a" stroke-width="3"/>
 <!-- btn1 icon -->
 <rect x="506" y="200" width="10" height="11" fill="#e8e8e8" stroke="#fff" stroke-width="1.5"/>
 <rect x="520" y="199" width="6" height="7" fill="#ddd" stroke="#fff" stroke-width="1.2"/>
 <path d="M516,203h4" stroke="#fff" stroke-width="1.5"/>
 <circle cx="529.5" cy="219.5" r="7" fill="#444"/>
 <path d="M529.5,219.5v-8 M529.5,219.5l-6,4 M529.5,219.5l6,4" stroke="#e02020" stroke-width="1.8"/>
 <path d="M529.5,219.5l-6,4" stroke="#20a020" stroke-width="1.8"/><path d="M529.5,219.5l6,4" stroke="#2040e0" stroke-width="1.8"/>
 <!-- btn2 cube -->
 <path d="M558,200 L563,195 L578,195 L578,209 L573,214 L558,214 Z" fill="#f5b800" stroke="#fff" stroke-width="1.3"/>
 <path d="M558,200 H573 V214 M573,200 L578,195" stroke="#fff" stroke-width="1.3" fill="none"/>
 <!-- btn3 cylinder -->
 <path d="M612,198 A7.5,3.5 0 0 1 627,198 V213 A7.5,3.5 0 0 1 612,213 Z" fill="none" stroke="#fff" stroke-width="1.6"/>
 <path d="M615,206.5h9" stroke="#fff" stroke-width="1.2" stroke-dasharray="2,1.5"/>
 <!-- btn4 magnifier -->
 <circle cx="674" cy="200" r="6" fill="none" stroke="#fff" stroke-width="2.5"/>
 <path d="M669.5,205 L662,213" stroke="#fff" stroke-width="3" stroke-linecap="round"/>
 <circle cx="685" cy="219.5" r="7.5" fill="#444"/>
 <rect x="681" y="215.5" width="8" height="8" fill="none" stroke="#ccc" stroke-width="1" stroke-dasharray="1.5,1"/>
 <!-- btn5 rotate -->
 <path d="M708,200 A17,17 0 0 1 735,192" stroke="#e0e4ec" stroke-width="5" fill="none"/>
 <path d="M740,211 A17,17 0 0 1 713,219" stroke="#e0e4ec" stroke-width="5" fill="none"/>
 <ellipse cx="724" cy="205.5" rx="14" ry="8" fill="#1a7ad0"/>
 <!-- triangles -->
 <path d="M511.5,233.5 h8 l-4,5z M563.5,233.5 h8 l-4,5z M615.5,233.5 h8 l-4,5z M667.5,233.5 h8 l-4,5z" fill="#111"/>
</g>
<!-- axis triad -->
<g stroke="#f4f4f4" stroke-width="1.1" fill="none">
 <path d="M554,801 L579,810 L561,822 L537,813 Z M537,813 V839 L561,848 L579,835 V810 M561,822 V848 M554,801 V826 L537,839 M554,826 L579,835"/>
</g>
<path d="M531,808 L536,789 L542,808 Z" fill="#101088"/>
<path d="M565,847 L584,856 L566,856 Z" fill="#d81010"/>
<path d="M557,821 L571,814 L562,827 Z" fill="#10a010"/>

</g>
</svg>
<!-- doc info -->
<div class="a" style="left:476px;top:898px;width:1079px;height:6px;background:#ececec"></div>
<div class="a" style="left:478px;top:909px;font-size:19.2px;color:#333">Documentation info</div>
<div class="a" style="left:1484px;top:914px;font-size:12px;color:#777">?</div>
<div class="a" style="left:1503px;top:919px;border-left:4px solid transparent;border-right:4px solid transparent;border-top:5px solid #666"></div>
<svg class="a" style="left:1521px;top:915px" width="10" height="12"><path d="M2 1h6M3 1v6h4V1M1 7h8M5 7v4" stroke="#666" stroke-width="1.2" fill="none"/></svg>
<div class="a" style="left:1540px;top:912px;font-size:14px;color:#666">✕</div>
<div class="a" style="left:475px;top:940px;width:1080px;height:1px;background:#eee"></div>
<div class="a" style="left:475px;top:958px;width:1080px;height:1px;background:#e8e8e8"></div>
<div class="a" style="left:475px;top:975px;width:1080px;height:1px;background:#eee"></div>
<div class="a" style="left:562px;top:940px;width:1px;height:52px;background:#e8e8e8"></div>
<div class="a" style="left:651px;top:940px;width:1px;height:52px;background:#e8e8e8"></div>
<div class="a" style="left:478px;top:943px;font-size:11px;color:#333">Page name</div>
<div class="a" style="left:567px;top:943px;font-size:11px;color:#333">Page index</div>
<div class="a" style="left:476px;top:960px;width:86px;height:15px;background:#0a8cf6"></div>
<div class="a" style="left:563px;top:960px;width:88px;height:15px;background:#0a8cf6"></div>
<div class="a" style="left:570px;top:961px;font-size:11px;color:#333">0</div>


<!-- ===== RIGHT ===== -->
<div class="a" style="left:1566px;top:150px;font-size:19.2px;color:#333">Dimensioning checklist</div>
<div class="a" style="left:1847px;top:154px;font-size:12px;color:#777">?</div>
<div class="a" style="left:1866px;top:159px;border-left:4px solid transparent;border-right:4px solid transparent;border-top:5px solid #666"></div>
<svg class="a" style="left:1884px;top:155px" width="10" height="12"><path d="M2 1h6M3 1v6h4V1M1 7h8M5 7v4" stroke="#666" stroke-width="1.2" fill="none"/></svg>
<div class="a" style="left:1902px;top:152px;font-size:14px;color:#666">✕</div>
<div class="a" style="left:1573px;top:190px;width:335px;height:759px;border-top:2px solid #6e6e6e;border-left:2px solid #6e6e6e;border-right:1px solid #dcdcdc;border-bottom:1px solid #dcdcdc;background:#fff"></div>
<div class="a" style="left:1625px;top:192px;width:1px;height:756px;background:#ececec"></div>
<div class="a" style="left:1743px;top:192px;width:1px;height:756px;background:#ececec"></div>
<div class="a" style="left:1810px;top:192px;width:1px;height:756px;background:#ececec"></div>
<div class="a" style="left:1575px;top:209px;width:332px;height:1px;background:#e4e4e4"></div>
<div class="a" style="left:1579px;top:195px;font-size:11px;color:#333;letter-spacing:-0.3px">Exist</div>
<div class="a" style="left:1630px;top:195px;font-size:11px;color:#333;letter-spacing:-0.3px">Tool</div>
<div class="a" style="left:1746px;top:195px;font-size:11px;color:#333;letter-spacing:-0.3px">Dimension...</div>
<div class="a" style="left:1814px;top:195px;font-size:11px;color:#333;letter-spacing:-0.3px">Value</div>
<div class="a" style="left:1579px;top:211px;font-size:10.5px;line-height:13px;color:#111;letter-spacing:-0.2px">0</div>
<div class="a" style="left:1630px;top:211px;font-size:10.5px;line-height:13px;color:#111;letter-spacing:-0.2px">T16 : Flat Ø10R1</div>
<div class="a" style="left:1747px;top:211px;font-size:10.5px;line-height:13px;color:#111;letter-spacing:-0.2px">Length</div>
<div class="a" style="left:1815px;top:211px;font-size:10.5px;line-height:13px;color:#111;letter-spacing:-0.2px">140.35 mm</div>
<div class="a" style="left:1579px;top:225px;font-size:10.5px;line-height:13px;color:#111;letter-spacing:-0.2px">0</div>
<div class="a" style="left:1630px;top:225px;font-size:10.5px;line-height:13px;color:#111;letter-spacing:-0.2px">T16 : Flat Ø10R1</div>
<div class="a" style="left:1747px;top:225px;font-size:10.5px;line-height:13px;color:#111;letter-spacing:-0.2px">Arc</div>
<div class="a" style="left:1815px;top:225px;font-size:10.5px;line-height:13px;color:#111;letter-spacing:-0.2px">1 mm</div>
<div class="a" style="left:1577px;top:239px;width:330px;height:13px;background:#00ef00"></div>
<div class="a" style="left:1625px;top:239px;width:1px;height:13px;background:#fff"></div>
<div class="a" style="left:1743px;top:239px;width:1px;height:13px;background:#fff"></div>
<div class="a" style="left:1810px;top:239px;width:1px;height:13px;background:#fff"></div>
<div class="a" style="left:1579px;top:239px;font-size:10.5px;line-height:13px;color:#111;letter-spacing:-0.2px">1</div>
<div class="a" style="left:1630px;top:239px;font-size:10.5px;line-height:13px;color:#111;letter-spacing:-0.2px">T17 : Flat Ø10R1</div>
<div class="a" style="left:1747px;top:239px;font-size:10.5px;line-height:13px;color:#111;letter-spacing:-0.2px">Radius</div>
<div class="a" style="left:1815px;top:239px;font-size:10.5px;line-height:13px;color:#111;letter-spacing:-0.2px">5 mm</div>
<div class="a" style="left:1579px;top:253px;font-size:10.5px;line-height:13px;color:#111;letter-spacing:-0.2px">0</div>
<div class="a" style="left:1630px;top:253px;font-size:10.5px;line-height:13px;color:#111;letter-spacing:-0.2px">T20 : FLAT Ø16</div>
<div class="a" style="left:1747px;top:253px;font-size:10.5px;line-height:13px;color:#111;letter-spacing:-0.2px">Length</div>
<div class="a" style="left:1815px;top:253px;font-size:10.5px;line-height:13px;color:#111;letter-spacing:-0.2px">111 mm</div>
<div class="a" style="left:1579px;top:267px;font-size:10.5px;line-height:13px;color:#111;letter-spacing:-0.2px">0</div>
<div class="a" style="left:1630px;top:267px;font-size:10.5px;line-height:13px;color:#111;letter-spacing:-0.2px">T20 : FLAT Ø16</div>
<div class="a" style="left:1747px;top:267px;font-size:10.5px;line-height:13px;color:#111;letter-spacing:-0.2px">Radius</div>
<div class="a" style="left:1815px;top:267px;font-size:10.5px;line-height:13px;color:#111;letter-spacing:-0.2px">8 mm</div>
<div class="a" style="left:1579px;top:281px;font-size:10.5px;line-height:13px;color:#111;letter-spacing:-0.2px">0</div>
<div class="a" style="left:1630px;top:281px;font-size:10.5px;line-height:13px;color:#111;letter-spacing:-0.2px">T21 : Bull_Nose Ø1...</div>
<div class="a" style="left:1747px;top:281px;font-size:10.5px;line-height:13px;color:#111;letter-spacing:-0.2px">Length</div>
<div class="a" style="left:1815px;top:281px;font-size:10.5px;line-height:13px;color:#111;letter-spacing:-0.2px">126 mm</div>
<div class="a" style="left:1579px;top:295px;font-size:10.5px;line-height:13px;color:#111;letter-spacing:-0.2px">0</div>
<div class="a" style="left:1630px;top:295px;font-size:10.5px;line-height:13px;color:#111;letter-spacing:-0.2px">T21 : Bull_Nose Ø1...</div>
<div class="a" style="left:1747px;top:295px;font-size:10.5px;line-height:13px;color:#111;letter-spacing:-0.2px">Arc</div>
<div class="a" style="left:1815px;top:295px;font-size:10.5px;line-height:13px;color:#111;letter-spacing:-0.2px">1.6 mm</div>
<div class="a" style="left:1577px;top:309px;width:330px;height:13px;background:#00ef00"></div>
<div class="a" style="left:1625px;top:309px;width:1px;height:13px;background:#fff"></div>
<div class="a" style="left:1743px;top:309px;width:1px;height:13px;background:#fff"></div>
<div class="a" style="left:1810px;top:309px;width:1px;height:13px;background:#fff"></div>
<div class="a" style="left:1579px;top:309px;font-size:10.5px;line-height:13px;color:#111;letter-spacing:-0.2px">1</div>
<div class="a" style="left:1630px;top:309px;font-size:10.5px;line-height:13px;color:#111;letter-spacing:-0.2px">T21 : Bull_Nose Ø1...</div>
<div class="a" style="left:1747px;top:309px;font-size:10.5px;line-height:13px;color:#111;letter-spacing:-0.2px">Radius</div>
<div class="a" style="left:1815px;top:309px;font-size:10.5px;line-height:13px;color:#111;letter-spacing:-0.2px">8 mm</div>
<div class="a" style="left:1577px;top:323px;width:330px;height:13px;background:#00ef00"></div>
<div class="a" style="left:1625px;top:323px;width:1px;height:13px;background:#fff"></div>
<div class="a" style="left:1743px;top:323px;width:1px;height:13px;background:#fff"></div>
<div class="a" style="left:1810px;top:323px;width:1px;height:13px;background:#fff"></div>
<div class="a" style="left:1579px;top:323px;font-size:10.5px;line-height:13px;color:#111;letter-spacing:-0.2px">1</div>
<div class="a" style="left:1630px;top:323px;font-size:10.5px;line-height:13px;color:#111;letter-spacing:-0.2px">T29 : Drill Ø12.7</div>
<div class="a" style="left:1747px;top:323px;font-size:10.5px;line-height:13px;color:#111;letter-spacing:-0.2px">Radius</div>
<div class="a" style="left:1815px;top:323px;font-size:10.5px;line-height:13px;color:#111;letter-spacing:-0.2px">6.35 mm</div>
<div class="a" style="left:1579px;top:337px;font-size:10.5px;line-height:13px;color:#111;letter-spacing:-0.2px">0</div>
<div class="a" style="left:1630px;top:337px;font-size:10.5px;line-height:13px;color:#111;letter-spacing:-0.2px">T30 : Bull_Nose Ø2...</div>
<div class="a" style="left:1747px;top:337px;font-size:10.5px;line-height:13px;color:#111;letter-spacing:-0.2px">Arc</div>
<div class="a" style="left:1815px;top:337px;font-size:10.5px;line-height:13px;color:#111;letter-spacing:-0.2px">2.75 mm</div>
<div class="a" style="left:1579px;top:351px;font-size:10.5px;line-height:13px;color:#111;letter-spacing:-0.2px">0</div>
<div class="a" style="left:1630px;top:351px;font-size:10.5px;line-height:13px;color:#111;letter-spacing:-0.2px">T30 : Bull_Nose Ø2...</div>
<div class="a" style="left:1747px;top:351px;font-size:10.5px;line-height:13px;color:#111;letter-spacing:-0.2px">Radius</div>
<div class="a" style="left:1815px;top:351px;font-size:10.5px;line-height:13px;color:#111;letter-spacing:-0.2px">20 mm</div>
<div class="a" style="left:1575px;top:224px;width:332px;height:1px;background:#eeeeee"></div>
<div class="a" style="left:1575px;top:238px;width:332px;height:1px;background:#eeeeee"></div>
<div class="a" style="left:1575px;top:252px;width:332px;height:1px;background:#eeeeee"></div>
<div class="a" style="left:1575px;top:266px;width:332px;height:1px;background:#eeeeee"></div>
<div class="a" style="left:1575px;top:280px;width:332px;height:1px;background:#eeeeee"></div>
<div class="a" style="left:1575px;top:294px;width:332px;height:1px;background:#eeeeee"></div>
<div class="a" style="left:1575px;top:308px;width:332px;height:1px;background:#eeeeee"></div>
<div class="a" style="left:1575px;top:322px;width:332px;height:1px;background:#eeeeee"></div>
<div class="a" style="left:1575px;top:336px;width:332px;height:1px;background:#eeeeee"></div>
<div class="a" style="left:1575px;top:350px;width:332px;height:1px;background:#eeeeee"></div>
<div class="a" style="left:1575px;top:364px;width:332px;height:1px;background:#eeeeee"></div>
<div class="a" style="left:1575px;top:378px;width:332px;height:1px;background:#eeeeee"></div>
<div class="a" style="left:1575px;top:392px;width:332px;height:1px;background:#eeeeee"></div>
<div class="a" style="left:1575px;top:406px;width:332px;height:1px;background:#eeeeee"></div>
<div class="a" style="left:1575px;top:420px;width:332px;height:1px;background:#eeeeee"></div>
<div class="a" style="left:1575px;top:434px;width:332px;height:1px;background:#eeeeee"></div>
<div class="a" style="left:1575px;top:448px;width:332px;height:1px;background:#eeeeee"></div>
<div class="a" style="left:1575px;top:462px;width:332px;height:1px;background:#eeeeee"></div>
<div class="a" style="left:1575px;top:476px;width:332px;height:1px;background:#eeeeee"></div>
<div class="a" style="left:1575px;top:490px;width:332px;height:1px;background:#eeeeee"></div>
<div class="a" style="left:1575px;top:504px;width:332px;height:1px;background:#eeeeee"></div>
<div class="a" style="left:1575px;top:518px;width:332px;height:1px;background:#eeeeee"></div>
<div class="a" style="left:1575px;top:532px;width:332px;height:1px;background:#eeeeee"></div>
<div class="a" style="left:1575px;top:546px;width:332px;height:1px;background:#eeeeee"></div>
<div class="a" style="left:1575px;top:560px;width:332px;height:1px;background:#eeeeee"></div>
<div class="a" style="left:1575px;top:574px;width:332px;height:1px;background:#eeeeee"></div>
<div class="a" style="left:1575px;top:588px;width:332px;height:1px;background:#eeeeee"></div>
<div class="a" style="left:1575px;top:602px;width:332px;height:1px;background:#eeeeee"></div>
<div class="a" style="left:1575px;top:616px;width:332px;height:1px;background:#eeeeee"></div>
<div class="a" style="left:1575px;top:630px;width:332px;height:1px;background:#eeeeee"></div>
<div class="a" style="left:1575px;top:644px;width:332px;height:1px;background:#eeeeee"></div>
<div class="a" style="left:1575px;top:658px;width:332px;height:1px;background:#eeeeee"></div>
<div class="a" style="left:1575px;top:672px;width:332px;height:1px;background:#eeeeee"></div>
<div class="a" style="left:1575px;top:686px;width:332px;height:1px;background:#eeeeee"></div>
<div class="a" style="left:1575px;top:700px;width:332px;height:1px;background:#eeeeee"></div>
<div class="a" style="left:1575px;top:714px;width:332px;height:1px;background:#eeeeee"></div>
<div class="a" style="left:1575px;top:728px;width:332px;height:1px;background:#eeeeee"></div>
<div class="a" style="left:1575px;top:742px;width:332px;height:1px;background:#eeeeee"></div>
<div class="a" style="left:1575px;top:756px;width:332px;height:1px;background:#eeeeee"></div>
<div class="a" style="left:1575px;top:770px;width:332px;height:1px;background:#eeeeee"></div>
<div class="a" style="left:1575px;top:784px;width:332px;height:1px;background:#eeeeee"></div>
<div class="a" style="left:1575px;top:798px;width:332px;height:1px;background:#eeeeee"></div>
<div class="a" style="left:1575px;top:812px;width:332px;height:1px;background:#eeeeee"></div>
<div class="a" style="left:1575px;top:826px;width:332px;height:1px;background:#eeeeee"></div>
<div class="a" style="left:1575px;top:840px;width:332px;height:1px;background:#eeeeee"></div>
<div class="a" style="left:1575px;top:854px;width:332px;height:1px;background:#eeeeee"></div>
<div class="a" style="left:1575px;top:868px;width:332px;height:1px;background:#eeeeee"></div>
<div class="a" style="left:1575px;top:882px;width:332px;height:1px;background:#eeeeee"></div>
<div class="a" style="left:1575px;top:896px;width:332px;height:1px;background:#eeeeee"></div>
<div class="a" style="left:1575px;top:910px;width:332px;height:1px;background:#eeeeee"></div>
<div class="a" style="left:1575px;top:924px;width:332px;height:1px;background:#eeeeee"></div>
<div class="a" style="left:1575px;top:938px;width:332px;height:1px;background:#eeeeee"></div>
<div class="a" style="left:1839px;top:966px;width:71px;height:24px;border:1px solid #adadad;background:#fff;text-align:center;line-height:22px;font-size:11.5px;color:#333">Close</div>

<!-- ===== BOTTOM TABS ===== -->
<!-- properties -->
<div class="a" style="left:10px;top:741px;width:448px;height:209px;border:1px solid #9a9a9a;background:#fff"></div>
<div class="a" style="left:10px;top:723px;width:64px;height:19px;border:1px solid #9a9a9a;border-bottom:none;background:#fff"></div>
<div class="a" style="left:16px;top:726px;font-size:11.5px;color:#333">Properties</div>
<div class="a" style="left:26px;top:749px;width:20px;height:20px;background:#c5d3ea"></div>
<div class="a" style="left:70px;top:749px;width:20px;height:20px;background:#c5d3ea"></div>
<svg class="a" style="left:26px;top:749px" width="90" height="20">
 <path d="M4 5h4v4H4z M4 12h4v4H4z" stroke="#555" stroke-width="1" fill="#fff"/>
 <path d="M10 5h7 M10 8h7 M10 12h7 M10 15h5" stroke="#555" stroke-width="1.2"/>
 <text x="27" y="10" font-size="8" fill="#5a7fd0" font-family="Liberation Sans">A</text>
 <text x="27" y="18" font-size="8" fill="#9b59b6" font-family="Liberation Sans">Z</text>
 <path d="M35 4v13 M33 14l2 3 2-3" stroke="#555" stroke-width="1" fill="none"/>
 <rect x="47" y="6" width="6" height="6" stroke="#3a70c0" fill="#fff"/><path d="M53 9h3 M58 3v14 M56 6l2-3 2 3 M56 14l2 3 2-3" stroke="#111" stroke-width="1.2" fill="none"/>
 <rect x="70" y="6" width="6" height="6" stroke="#3a70c0" fill="#fff"/><path d="M76 9h3 M81 3v14 M79 5l2 3 2-3 M79 15l2-3 2 3" stroke="#111" stroke-width="1.2" fill="none"/>
</svg>
<div class="a" style="left:120px;top:747px;width:325px;height:24px;border:1px solid #d8d8d8;background:#fff"></div>
<div class="a" style="left:125px;top:752px;font-size:11.5px;color:#777">Search</div>
<svg class="a" style="left:424px;top:750px" width="16" height="16"><circle cx="9" cy="7" r="4.5" stroke="#336" stroke-width="1.3" fill="none"/><path d="M6 10l-4 4" stroke="#336" stroke-width="1.5"/></svg>
<div class="a" style="left:23px;top:776px;font-size:11px;color:#777;letter-spacing:-0.3px">Tool reference</div>
<div class="a" style="left:293px;top:776px;font-size:11px;color:#777;letter-spacing:-0.3px">FLAT Ø16 - Flat Ø10R1</div>
<div class="a" style="left:19px;top:791px;width:430px;height:17px;background:#dce4ef"></div>
<div class="a" style="left:23px;top:793px;font-size:11px;color:#333;letter-spacing:-0.3px">Length compensation (mm)</div>
<svg class="a" style="left:274px;top:794px" width="12" height="12"><path d="M9 1H1v9h9V5" stroke="#555" stroke-width="1" fill="none"/><path d="M5 7l5-5 M8 10l2-2" stroke="#555" stroke-width="1"/></svg>
<div class="a" style="left:23px;top:810px;font-size:11px;color:#333;letter-spacing:-0.3px">Radius compensation (mm)</div>
<svg class="a" style="left:274px;top:811px" width="12" height="12"><path d="M9 1H1v9h9V5" stroke="#555" stroke-width="1" fill="none"/><path d="M5 7l5-5 M8 10l2-2" stroke="#555" stroke-width="1"/></svg>
<div class="a" style="left:293px;top:810px;font-size:11px;color:#333;letter-spacing:-0.3px">X</div>
<div class="a" style="left:19px;top:825px;width:430px;height:17px;background:#dce4ef"></div>
<div class="a" style="left:23px;top:827px;font-size:11px;color:#333;letter-spacing:-0.3px">Rate of control</div>
<svg class="a" style="left:274px;top:828px" width="12" height="12"><path d="M9 1H1v9h9V5" stroke="#555" stroke-width="1" fill="none"/><path d="M5 7l5-5 M8 10l2-2" stroke="#555" stroke-width="1"/></svg>
<div class="a" style="left:23px;top:844px;font-size:11px;color:#333;letter-spacing:-0.3px">Tol min</div>
<svg class="a" style="left:274px;top:845px" width="12" height="12"><path d="M9 1H1v9h9V5" stroke="#555" stroke-width="1" fill="none"/><path d="M5 7l5-5 M8 10l2-2" stroke="#555" stroke-width="1"/></svg>
<div class="a" style="left:293px;top:844px;font-size:11px;color:#333;letter-spacing:-0.3px">-0.1</div>
<div class="a" style="left:19px;top:859px;width:430px;height:17px;background:#dce4ef"></div>
<div class="a" style="left:23px;top:861px;font-size:11px;color:#333;letter-spacing:-0.3px">Tol max</div>
<svg class="a" style="left:274px;top:862px" width="12" height="12"><path d="M9 1H1v9h9V5" stroke="#555" stroke-width="1" fill="none"/><path d="M5 7l5-5 M8 10l2-2" stroke="#555" stroke-width="1"/></svg>
<div class="a" style="left:293px;top:861px;font-size:11px;color:#333;letter-spacing:-0.3px">0.5</div>
<div class="a" style="left:21px;top:879px;width:12px;height:12px;border:1px solid #777;background:#fff"></div>
<div class="a" style="left:40px;top:878px;font-size:11px;color:#333;letter-spacing:-0.3px">Manufacturing dimension</div>
<div class="a" style="left:19px;top:893px;width:430px;height:17px;background:#dce4ef"></div>
<div class="a" style="left:23px;top:895px;font-size:11px;color:#333;letter-spacing:-0.3px">Comments</div>
<svg class="a" style="left:274px;top:896px" width="12" height="12"><path d="M9 1H1v9h9V5" stroke="#555" stroke-width="1" fill="none"/><path d="M5 7l5-5 M8 10l2-2" stroke="#555" stroke-width="1"/></svg>
<!-- buttons -->
<div class="a" style="left:308px;top:966px;width:72px;height:24px;border:1px solid #adadad;background:#fff;text-align:center;line-height:22px;font-size:11.5px;color:#333">Apply</div>
<div class="a" style="left:388px;top:966px;width:72px;height:24px;border:1px solid #adadad;background:#fff;text-align:center;line-height:22px;font-size:11.5px;color:#333">Cancel</div>

<div class="a" style="left:0;top:994px;width:467px;height:23px;background:#fcf3dc"></div>
<div class="a" style="left:474px;top:994px;width:1081px;height:23px;background:#fcf3dc"></div>
<div class="a" style="left:1562px;top:994px;width:357px;height:23px;background:#fcf3dc"></div>
<svg class="a" style="left:4px;top:996px" width="16" height="14"><path d="M1 3h5l2 2h7v8H1z" fill="#4c9a78"/></svg>
<div class="a" style="left:21px;top:996px;font-size:11.5px;color:#333;font-weight:normal;letter-spacing:-0.1px">Project</div>
<div class="a" style="left:1px;top:1012px;width:59px;height:3px;background:#5b9f79"></div>
<svg class="a" style="left:68px;top:996px" width="16" height="14"><path d="M1 3h5l2 2h7v8H1z" fill="#3f7fbf"/></svg>
<div class="a" style="left:85px;top:996px;font-size:11.5px;color:#333;font-weight:normal;letter-spacing:-0.1px">Process edit</div>
<div class="a" style="left:65px;top:1012px;width:85px;height:3px;background:#2c4f99"></div>
<div class="a" style="left:157px;top:996px;width:15px;height:15px;background:#6cb82c;color:#fff;font-weight:bold;font-size:9px;line-height:15px;text-align:center;letter-spacing:-1px">NC</div>
<div class="a" style="left:175px;top:996px;font-size:11.5px;color:#333;font-weight:normal;letter-spacing:-0.1px">Process documentation</div>
<div class="a" style="left:155px;top:1012px;width:144px;height:3px;background:#f5b800"></div>
<div class="a" style="left:302px;top:992px;width:101px;height:25px;background:#fff;border:1px solid #d8d8d8;border-bottom:none"></div>
<svg class="a" style="left:306px;top:995px" width="16" height="16"><path d="M4 2h9 M4 0v4 M13 0v4" stroke="#d33" stroke-width="1"/><path d="M2 14 L6 6 L13 5 L10 12 Z" fill="#f5c000" stroke="#8a6000" stroke-width="0.8"/></svg>
<div class="a" style="left:324px;top:996px;font-size:11.5px;color:#333;font-weight:bold;letter-spacing:-0.1px">Dimensioning</div>
<div class="a" style="left:303px;top:1012px;width:99px;height:3px;background:#f5b800"></div>
<div class="a" style="left:478px;top:996px;width:14px;height:14px;border-radius:50%;background:#1a6fc4;color:#fff;font-weight:bold;font-size:10px;line-height:14px;text-align:center;font-family:Liberation Serif">i</div>
<div class="a" style="left:496px;top:996px;font-size:11.5px;color:#333;font-weight:normal;letter-spacing:-0.1px">Project info.</div>
<div class="a" style="left:476px;top:1012px;width:86px;height:3px;background:#5b9f79"></div>
<div class="a" style="left:571px;top:997px;width:12px;height:12px;border-radius:50%;background:#d81818"></div>
<div class="a" style="left:587px;top:996px;font-size:11.5px;color:#333;font-weight:normal;letter-spacing:-0.1px">Simul. process er...</div>
<div class="a" style="left:567px;top:1012px;width:113px;height:3px;background:#2c4f99"></div>
<svg class="a" style="left:688px;top:996px" width="16" height="15"><rect x="4" y="1" width="11" height="9" fill="#2a8a3a" stroke="#333"/><rect x="6" y="3" width="6" height="3" fill="#fff"/><circle cx="5" cy="11" r="3.5" fill="#e8b000" stroke="#333" stroke-width="0.8"/></svg>
<div class="a" style="left:705px;top:996px;font-size:11.5px;color:#333;font-weight:normal;letter-spacing:-0.1px">Simul. process st...</div>
<div class="a" style="left:685px;top:1012px;width:113px;height:3px;background:#2c4f99"></div>
<div class="a" style="left:806px;top:996px;width:14px;height:14px;border-radius:50%;background:#1a6fc4;color:#fff;font-weight:bold;font-size:10px;line-height:14px;text-align:center;font-family:Liberation Serif">i</div>
<div class="a" style="left:823px;top:996px;font-size:11.5px;color:#333;font-weight:normal;letter-spacing:-0.1px">Simul. process in...</div>
<div class="a" style="left:803px;top:1012px;width:113px;height:3px;background:#2c4f99"></div>
<div class="a" style="left:924px;top:996px;width:14px;height:14px;border-radius:50%;background:#1a6fc4;color:#fff;font-weight:bold;font-size:10px;line-height:14px;text-align:center;font-family:Liberation Serif">i</div>
<div class="a" style="left:941px;top:996px;font-size:11.5px;color:#333;font-weight:normal;letter-spacing:-0.1px">Selection info</div>
<div class="a" style="left:920px;top:1012px;width:95px;height:3px;background:#2c4f99"></div>
<div class="a" style="left:1024px;top:996px;width:14px;height:14px;border-radius:50%;background:#1a6fc4;color:#fff;font-weight:bold;font-size:10px;line-height:14px;text-align:center;font-family:Liberation Serif">V</div>
<div class="a" style="left:1041px;top:996px;font-size:11.5px;color:#333;font-weight:normal;letter-spacing:-0.1px">Variables</div>
<div class="a" style="left:1021px;top:1012px;width:71px;height:3px;background:#2c4f99"></div>
<div class="a" style="left:1095px;top:992px;width:117px;height:25px;background:#fff;border:1px solid #d8d8d8;border-bottom:none"></div>
<div class="a" style="left:1100px;top:996px;width:14px;height:14px;border-radius:50%;background:#1a6fc4;color:#fff;font-weight:bold;font-size:10px;line-height:14px;text-align:center;font-family:Liberation Serif">i</div>
<div class="a" style="left:1117px;top:996px;font-size:11.5px;color:#333;font-weight:bold;letter-spacing:-0.1px">Documentation ...</div>
<div class="a" style="left:1096px;top:1012px;width:115px;height:3px;background:#f5b800"></div>
<svg class="a" style="left:1218px;top:996px" width="14" height="15"><path d="M1 1h12 M1 14h12" stroke="#888" stroke-width="1"/><path d="M7 2v11 M5 4l2-2 2 2 M5 11l2 2 2-2" stroke="#d32" stroke-width="1.2" fill="none"/></svg>
<div class="a" style="left:1235px;top:996px;font-size:11.5px;color:#333;font-weight:normal;letter-spacing:-0.1px">Measurements</div>
<div class="a" style="left:1215px;top:1012px;width:98px;height:3px;background:#2c4f99"></div>
<svg class="a" style="left:1320px;top:996px" width="16" height="15"><rect x="1" y="1" width="12" height="10" fill="#dfe8f5" stroke="#6a87b8"/><rect x="1" y="1" width="12" height="3" fill="#6a87b8"/><circle cx="12" cy="12" r="3.5" fill="#1a6fc4"/></svg>
<div class="a" style="left:1339px;top:996px;font-size:11.5px;color:#333;font-weight:normal;letter-spacing:-0.1px">Debug simul. sta...</div>
<div class="a" style="left:1319px;top:1012px;width:113px;height:3px;background:#2c4f99"></div>
<svg class="a" style="left:1440px;top:996px" width="16" height="15"><rect x="1" y="1" width="12" height="10" fill="#dfe8f5" stroke="#6a87b8"/><rect x="1" y="1" width="12" height="3" fill="#6a87b8"/><circle cx="12" cy="12" r="3.5" fill="#1a6fc4"/></svg>
<div class="a" style="left:1457px;top:996px;font-size:11.5px;color:#333;font-weight:normal;letter-spacing:-0.1px">Debug simul. Co...</div>
<div class="a" style="left:1436px;top:1012px;width:115px;height:3px;background:#2c4f99"></div>
<svg class="a" style="left:1567px;top:996px" width="16" height="15"><rect x="1" y="1" width="12" height="10" fill="#f5c36a" stroke="#6a87b8"/><rect x="3" y="5" width="8" height="2" fill="#fff"/><circle cx="12" cy="12" r="3.5" fill="#1a6fc4"/></svg>
<div class="a" style="left:1584px;top:996px;font-size:11.5px;color:#333;font-weight:normal;letter-spacing:-0.1px">Program</div>
<div class="a" style="left:1564px;top:1012px;width:67px;height:3px;background:#2c4f99"></div>
<div class="a" style="left:1638px;top:996px;width:15px;height:15px;background:#6cb82c;color:#fff;font-weight:bold;font-size:9px;line-height:15px;text-align:center;letter-spacing:-1px">NC</div>
<div class="a" style="left:1656px;top:996px;font-size:11.5px;color:#333;font-weight:normal;letter-spacing:-0.1px">Documentation prop...</div>
<div class="a" style="left:1636px;top:1012px;width:137px;height:3px;background:#f5b800"></div>
<div class="a" style="left:1776px;top:992px;width:140px;height:25px;background:#fff;border:1px solid #d8d8d8;border-bottom:none"></div>
<svg class="a" style="left:1779px;top:995px" width="16" height="16"><path d="M4 2h9 M4 0v4 M13 0v4" stroke="#d33" stroke-width="1"/><path d="M2 14 L6 6 L13 5 L10 12 Z" fill="#f5c000" stroke="#8a6000" stroke-width="0.8"/></svg>
<div class="a" style="left:1798px;top:996px;font-size:11.5px;color:#333;font-weight:bold;letter-spacing:-0.1px">Dimensioning checkl...</div>
<div class="a" style="left:1777px;top:1012px;width:138px;height:3px;background:#f5b800"></div>
</body></html>
